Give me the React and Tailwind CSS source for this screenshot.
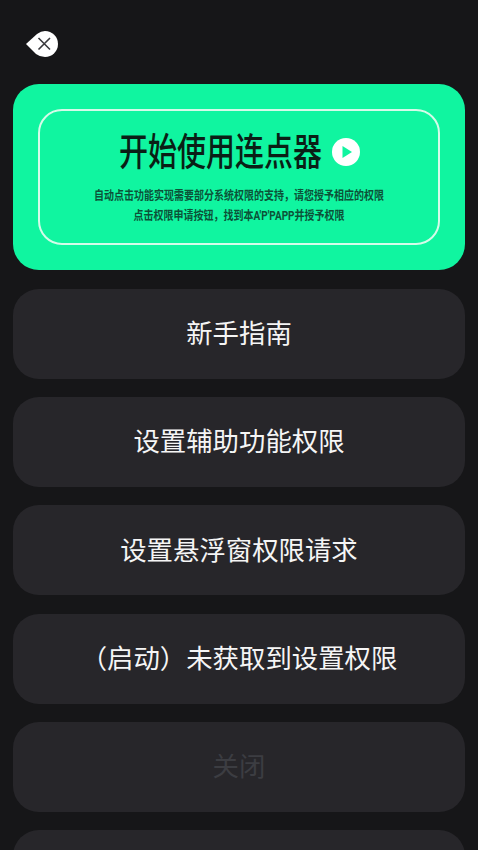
const FONT = "font-['Roboto','Noto_Sans_CJK_SC',sans-serif]";

const rows = [
  { label: '新手指南' },
  { label: '设置辅助功能权限' },
  { label: '设置悬浮窗权限请求' },
  { label: '（启动）未获取到设置权限' },
  { label: '关闭', muted: true },
  { label: '', muted: true },
];

function CloseBadge() {
  return (
    <svg width="34" height="30" viewBox="0 0 34 30" aria-label="close">
      <path d="M1 15 L12 5 Q16 2 20 2 A13 13 0 1 1 20 28 Q15 28 11 25 Z" fill="#fff" />
      <path d="M13.5 9 L25 20.5 M25 9 L13.5 20.5" stroke="#3a3a3e" strokeWidth="1.6" fill="none" />
    </svg>
  );
}

function PlayBadge() {
  return (
    <svg width="28" height="28" viewBox="0 0 28 28">
      <circle cx="14" cy="14" r="14" fill="#fff" />
      <path d="M10.5 8 L20 14 L10.5 20 Z" fill="#10f5a0" />
    </svg>
  );
}

function Row({ label, muted }) {
  return (
    <button
      className={`h-[90px] shrink-0 w-full rounded-[26px] bg-[#27262a] flex items-center justify-center pt-[2px] text-[26.4px] ${
        muted ? 'text-[#3c3d42]' : 'text-[#f5f5f5]'
      }`}
    >
      {label}
    </button>
  );
}

export default function App() {
  return (
    <div className={`h-[850px] overflow-hidden bg-[#161618] px-[13px] ${FONT}`}>
      <div className="pt-[29px] pl-[12px] h-[84px]">
        <CloseBadge />
      </div>

      <div className="h-[186px] rounded-[26px] bg-[#10f5a0] px-[25px] py-[25px]">
        <div className="h-[136px] rounded-[24px] border-2 border-[#d5fbe9] flex flex-col items-center pt-[20px]">
          <div className="flex items-center gap-[10px] pl-[1px] h-[42px]">
            <span className="text-[29px] leading-[42px] font-medium text-[#0a1f16] scale-y-[1.3]">
              开始使用连点器
            </span>
            <PlayBadge />
          </div>
          <div className="mt-[17px] text-center text-[10px] leading-[16px] font-bold text-[#0c5238] scale-y-[1.25]">
            <p>自动点击功能实现需要部分系统权限的支持，请您授予相应的权限</p>
            <p>点击权限申请按钮，找到本A'P'PAPP并授予权限</p>
          </div>
        </div>
      </div>

      <div className="mt-[19px] flex flex-col gap-[18.2px]">
        {rows.map((row, i) => (
          <Row key={i} label={row.label} muted={row.muted} />
        ))}
      </div>
    </div>
  );
}
